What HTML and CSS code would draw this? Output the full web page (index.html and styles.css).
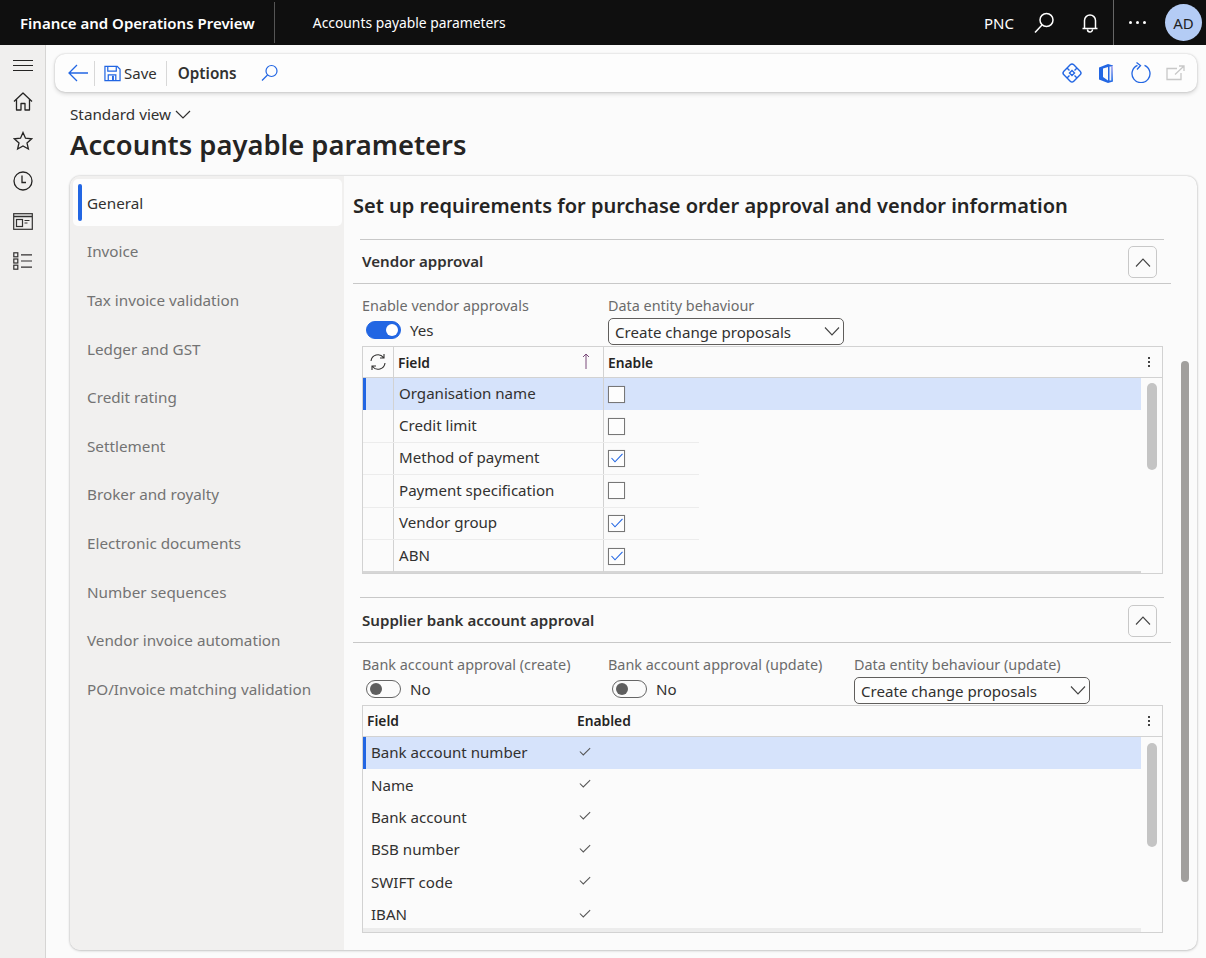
FILE: index.html
```html
<!DOCTYPE html>
<html>
<head>
    <meta charset="UTF-8">
    <link rel="stylesheet" href="styles.css">
</head>
<body>
    <header class="top-bar">
        <div class="app-name">Finance and Operations Preview</div>
        <div class="top-divider"></div>
        <div class="page-name">Accounts payable parameters</div>
        <div class="top-right">
            <span class="company">PNC</span>
            <svg class="search-icon" width="24" height="24" viewBox="0 0 24 24" fill="none" stroke="#fff" stroke-width="1.5"><circle cx="14.5" cy="9" r="6.5"/><path d="M10 14 3 21.5"/></svg>
            <svg class="bell-icon" width="16" height="20" viewBox="0 0 16 20" fill="none" stroke="#fff" stroke-width="1.5"><path d="M2.5 15V7.500a5.500 5.500 0 0 1 11 0V15M.5 15.500h15M5.500 16.500a2.500 2.500 0 0 0 5 0"/></svg>
            <div class="top-divider-tall"></div>
            <div class="more-dots"><i></i><i></i><i></i></div>
            <div class="avatar">AD</div>
        </div>
    </header>

    <div class="app-body">
        <nav class="side-nav">
            <div class="nav-menu"><svg width="20" height="12" viewBox="0 0 20 12" fill="none" stroke="#252423" stroke-width="1"><path d="M0 1.500h20M0 6.500h20M0 11.500h20"/></svg></div>
            <div class="nav-item"><svg width="20" height="19" viewBox="0 0 20 19" fill="none" stroke="#252423" stroke-width="1.300" stroke-linejoin="round"><path d="M1 9.500 10 1l9 8.500"/><path d="M3.500 7.500V18H8v-6.500h4V18h4.500V7.500"/></svg></div>
            <div class="nav-item"><svg width="20" height="20" viewBox="0 0 20 20" fill="none" stroke="#252423" stroke-width="1.300"><path d="m10 1.500 2.500 5.700 6.200.6-4.700 4.100 1.400 6.100L10 14.900l-5.400 3.100L6 11.900 1.300 7.800l6.200-.6z"/></svg></div>
            <div class="nav-item"><svg width="20" height="20" viewBox="0 0 20 20" fill="none" stroke="#252423" stroke-width="1.300"><circle cx="10" cy="10" r="9"/><path d="M9 4.500V11.500H13"/></svg></div>
            <div class="nav-item"><svg width="20" height="17" viewBox="0 0 20 17" fill="none" stroke="#323130" stroke-width="1.200"><rect x=".7" y=".7" width="18.600" height="15.600"/><path d="M1 3.500h18" stroke-width="1.500"/><rect x="3.500" y="6.500" width="6" height="7"/><path d="M11.500 7.500h5M11.500 10h3"/></svg></div>
            <div class="nav-item"><svg width="20" height="18" viewBox="0 0 20 18" fill="none" stroke="#323130" stroke-width="1.200"><rect x=".8" y=".8" width="4" height="4"/><rect x=".8" y="7" width="4" height="4"/><rect x=".8" y="13.200" width="4" height="4"/><path d="M8 2.800h11M8 9h11M8 15.200h11"/></svg></div>
        </nav>

        <main class="main">
            <div class="toolbar">
                <svg class="back-icon" width="20" height="18" viewBox="0 0 20 18" fill="none" stroke="#2266e3" stroke-width="1.300"><path d="M20 9H1M9 1 1 9l8 8"/></svg>
                <div class="tool-sep tool-sep-first"></div>
                <svg class="save-icon" width="17" height="17" viewBox="0 0 18 18" fill="none" stroke="#2266e3" stroke-width="1.300"><path d="M1 1.500h13l3 3v12H1z"/><path d="M4 1.500v5h9v-5M4.500 16.500V10.500h8v6"/><path d="M9.500 11.500v5" stroke-width="2"/></svg>
                <span class="tool-save">Save</span>
                <div class="tool-sep"></div>
                <span class="tool-options">Options</span>
                <svg class="tool-search" width="18" height="18" viewBox="0 0 18 18" fill="none" stroke="#2266e3" stroke-width="1.200"><circle cx="10.500" cy="7" r="5.500"/><path d="M6.500 11 1 16.500"/></svg>
                <div class="tool-right">
                    <svg width="20" height="20" viewBox="0 0 20 20" fill="none" stroke="#2266e3" stroke-width="1.400"><rect x="3" y="3" width="14" height="14" rx="2.500" transform="rotate(45 10 10)"/><path d="M10 7.500 12.500 10 10 12.500 7.500 10zM5 5l2.500 2.500M15 5l-2.500 2.500M5 15l2.500-2.500M15 15l-2.500-2.500"/></svg>
                    <svg width="16" height="19" viewBox="0 0 16 19"><defs><linearGradient id="officeEdge" x1="0" y1="0" x2="0" y2="1"><stop offset="0" stop-color="#c9b8f0"/><stop offset="1" stop-color="#2f7be8"/></linearGradient></defs><path d="M10 0 1 3.500v12L10 19l5-1.500V1.500z" fill="#2266e3"/><path d="M10 3 5 4.500V13l5 3.500z" fill="#fbfbfb"/><path d="M11.500 2.500h2v14h-2z" fill="#eef1fb"/><path d="M13.500 2h1.500v15h-1.500z" fill="url(#officeEdge)"/></svg>
                    <svg class="refresh-icon" width="20" height="21" viewBox="0 0 20 21" fill="none" stroke="#2266e3" stroke-width="1.300"><path d="M6.500 3.300a9 9 0 1 0 7 0"/><path d="M5.500.5 9.500 3.500 6 7.500"/></svg>
                    <svg width="19" height="16" viewBox="0 0 19 16" fill="none" stroke="#c8c8c8" stroke-width="1.300"><path d="M11 3.500H1v11h14V8M9 9.500 18 1M13 1h5v5"/></svg>
                </div>
            </div>

            <div class="view-picker">Standard view
                <svg width="16" height="9" viewBox="0 0 16 9" fill="none" stroke="#323130" stroke-width="1.200"><path d="m1 1 7 7 7-7"/></svg>
            </div>
            <h1 class="page-title">Accounts payable parameters</h1>

            <div class="panel">
                <ul class="tabs">
                    <li class="tab tab-active">General</li>
                    <li class="tab">Invoice</li>
                    <li class="tab">Tax invoice validation</li>
                    <li class="tab">Ledger and GST</li>
                    <li class="tab">Credit rating</li>
                    <li class="tab">Settlement</li>
                    <li class="tab">Broker and royalty</li>
                    <li class="tab">Electronic documents</li>
                    <li class="tab">Number sequences</li>
                    <li class="tab">Vendor invoice automation</li>
                    <li class="tab">PO/Invoice matching validation</li>
                </ul>

                <div class="content">
                    <h2 class="content-title">Set up requirements for purchase order approval and vendor information</h2>

                    <section class="section">
                        <div class="section-head">
                            <span class="section-title">Vendor approval</span>
                            <button class="collapse-btn"><svg width="16" height="9" viewBox="0 0 16 9" fill="none" stroke="#444" stroke-width="1.100"><path d="m1 8.500 7-7.500 7 7.500"/></svg></button>
                        </div>
                        <div class="fields">
                            <div class="field-group">
                                <div class="field-label">Enable vendor approvals</div>
                                <div class="toggle-row">
                                    <span class="toggle toggle-on"></span>
                                    <span>Yes</span>
                                </div>
                            </div>
                            <div class="field-group">
                                <div class="field-label">Data entity behaviour</div>
                                <div class="select">Create change proposals
                                    <svg width="16" height="9" viewBox="0 0 16 9" fill="none" stroke="#444" stroke-width="1.100"><path d="m1 .5 7 7.500 7-7.500"/></svg>
                                </div>
                            </div>
                        </div>

                        <div class="grid">
                            <div class="grid-head">
                                <div class="mark-cell">
                                    <svg width="18" height="18" viewBox="0 0 18 18" fill="none" stroke="#323130" stroke-width="1.100"><path d="M2 8a7 7 0 0 1 12.500-3.500M16 10a7 7 0 0 1-12.500 3.500M15 1v4h-4M3 17v-4h4"/></svg>
                                </div>
                                <div class="field-cell head-field">Field
                                    <svg class="sort-arrow" width="8" height="16" viewBox="0 0 8 16" fill="none" stroke="#7a4a7a" stroke-width="1"><path d="M4 16V1M1 4l3-3 3 3"/></svg>
                                </div>
                                <div class="enable-cell head-enable">Enable</div>
                                <div class="grid-dots"><i></i><i></i><i></i></div>
                            </div>
                            <div class="row row-selected"><div class="row-cells"><div class="mark-cell"></div><div class="field-cell">Organisation name</div><div class="enable-cell"><span class="check"></span></div></div></div>
                            <div class="row"><div class="row-cells"><div class="mark-cell"></div><div class="field-cell">Credit limit</div><div class="enable-cell"><span class="check"></span></div></div></div>
                            <div class="row"><div class="row-cells"><div class="mark-cell"></div><div class="field-cell">Method of payment</div><div class="enable-cell"><span class="check"><svg width="12" height="10" viewBox="0 0 12 10" fill="none" stroke="#2266e3" stroke-width="1.100"><path d="m.5 5 3.500 3.800 7.500-8"/></svg></span></div></div></div>
                            <div class="row"><div class="row-cells"><div class="mark-cell"></div><div class="field-cell">Payment specification</div><div class="enable-cell"><span class="check"></span></div></div></div>
                            <div class="row"><div class="row-cells"><div class="mark-cell"></div><div class="field-cell">Vendor group</div><div class="enable-cell"><span class="check"><svg width="12" height="10" viewBox="0 0 12 10" fill="none" stroke="#2266e3" stroke-width="1.100"><path d="m.5 5 3.500 3.800 7.500-8"/></svg></span></div></div></div>
                            <div class="row row-last"><div class="row-cells"><div class="mark-cell"></div><div class="field-cell">ABN</div><div class="enable-cell"><span class="check"><svg width="12" height="10" viewBox="0 0 12 10" fill="none" stroke="#2266e3" stroke-width="1.100"><path d="m.5 5 3.500 3.800 7.500-8"/></svg></span></div></div></div>
                            <div class="grid-hscroll"></div>
                            <div class="grid-scrollbar"></div>
                        </div>
                    </section>

                    <section class="section section-second">
                        <div class="section-head">
                            <span class="section-title">Supplier bank account approval</span>
                            <button class="collapse-btn"><svg width="16" height="9" viewBox="0 0 16 9" fill="none" stroke="#444" stroke-width="1.100"><path d="m1 8.500 7-7.500 7 7.500"/></svg></button>
                        </div>
                        <div class="fields">
                            <div class="field-group">
                                <div class="field-label">Bank account approval (create)</div>
                                <div class="toggle-row">
                                    <span class="toggle"></span>
                                    <span>No</span>
                                </div>
                            </div>
                            <div class="field-group">
                                <div class="field-label">Bank account approval (update)</div>
                                <div class="toggle-row">
                                    <span class="toggle"></span>
                                    <span>No</span>
                                </div>
                            </div>
                            <div class="field-group">
                                <div class="field-label">Data entity behaviour (update)</div>
                                <div class="select">Create change proposals
                                    <svg width="16" height="9" viewBox="0 0 16 9" fill="none" stroke="#444" stroke-width="1.100"><path d="m1 .5 7 7.500 7-7.500"/></svg>
                                </div>
                            </div>
                        </div>

                        <div class="grid">
                            <div class="grid-head">
                                <div class="bank-name head-field">Field</div>
                                <div class="bank-enabled head-enable">Enabled</div>
                                <div class="grid-dots"><i></i><i></i><i></i></div>
                            </div>
                            <div class="row row-plain row-selected"><div class="bank-name">Bank account number</div><div class="bank-enabled"><svg class="tick" width="12" height="9" viewBox="0 0 14 10" fill="none" stroke="#555" stroke-width="1.200"><path d="m1 5 4 4 8-8"/></svg></div></div>
                            <div class="row row-plain"><div class="bank-name">Name</div><div class="bank-enabled"><svg class="tick" width="12" height="9" viewBox="0 0 14 10" fill="none" stroke="#555" stroke-width="1.200"><path d="m1 5 4 4 8-8"/></svg></div></div>
                            <div class="row row-plain"><div class="bank-name">Bank account</div><div class="bank-enabled"><svg class="tick" width="12" height="9" viewBox="0 0 14 10" fill="none" stroke="#555" stroke-width="1.200"><path d="m1 5 4 4 8-8"/></svg></div></div>
                            <div class="row row-plain"><div class="bank-name">BSB number</div><div class="bank-enabled"><svg class="tick" width="12" height="9" viewBox="0 0 14 10" fill="none" stroke="#555" stroke-width="1.200"><path d="m1 5 4 4 8-8"/></svg></div></div>
                            <div class="row row-plain"><div class="bank-name">SWIFT code</div><div class="bank-enabled"><svg class="tick" width="12" height="9" viewBox="0 0 14 10" fill="none" stroke="#555" stroke-width="1.200"><path d="m1 5 4 4 8-8"/></svg></div></div>
                            <div class="row row-plain"><div class="bank-name">IBAN</div><div class="bank-enabled"><svg class="tick" width="12" height="9" viewBox="0 0 14 10" fill="none" stroke="#555" stroke-width="1.200"><path d="m1 5 4 4 8-8"/></svg></div></div>
                            <div class="grid-hscroll grid-hscroll-light"></div>
                            <div class="grid-scrollbar grid-scrollbar-long"></div>
                        </div>
                    </section>

                    <div class="page-scrollbar"></div>
                </div>
            </div>
        </main>
    </div>
</body>
</html>
```

FILE: styles.css
```css
* {
    box-sizing: border-box;
}
body {
    margin: 0;
    width: 1206px;
    height: 958px;
    overflow: hidden;
    font-family: "Noto Sans", Arial, sans-serif;
    font-size: 15.1px;
    color: #323130;
    background-color: #fbfbfb;
}
h1, h2, ul {
    margin: 0;
    padding: 0;
}

/* top bar */
.top-bar {
    display: flex;
    align-items: center;
    height: 45px;
    padding-left: 20px;
    background-color: #0f0f0f;
    color: white;
}
.app-name {
    font-size: 15px;
    font-weight: 600;
}
.top-divider {
    width: 1px;
    height: 41px;
    margin: 0 38px 0 19px;
    background-color: #555;
}
.page-name {
    font-size: 13.850px;
}
.top-right {
    display: flex;
    align-items: center;
    margin-left: auto;
    height: 45px;
}
.company {
    margin-right: 18px;
    font-size: 15px;
}
.search-icon {
    margin-right: 26px;
}
.bell-icon {
    margin-right: 15px;
}
.top-divider-tall {
    width: 1px;
    height: 45px;
    background-color: #666;
}
.more-dots {
    display: flex;
    gap: 4px;
    margin: 0 19px 0 15px;
}
.more-dots i {
    width: 3px;
    height: 3px;
    border-radius: 50%;
    background-color: white;
}
.avatar {
    display: flex;
    align-items: center;
    justify-content: center;
    width: 37px;
    height: 37px;
    margin-right: 4px;
    border-radius: 50%;
    background-color: #b4ccf5;
    color: #1f1f1f;
    font-size: 15px;
}

/* layout */
.app-body {
    display: flex;
    height: 913px;
}
.side-nav {
    width: 46px;
    background-color: #f0efee;
    border-right: 1px solid #d6d5d4;
}
.nav-menu, .nav-item {
    display: flex;
    align-items: center;
    justify-content: center;
}
.nav-menu {
    height: 36px;
    padding-top: 4px;
}
.nav-item {
    height: 40px;
}
.main {
    flex: 1;
    padding: 9px 9px 0 9px;
}

/* toolbar */
.toolbar {
    display: flex;
    align-items: center;
    height: 38px;
    padding-left: 13px;
    border-radius: 10px;
    background-color: #fdfdfd;
    box-shadow: 0 0 2px rgba(0, 0, 0, 0.2), 0 2px 4px rgba(0, 0, 0, 0.15);
}
.back-icon {
    flex: none;
}
.tool-sep {
    width: 1px;
    height: 25px;
    margin: 0 9px 0 9px;
    background-color: #d8d8d8;
}
.tool-sep-first {
    margin: 0 9px 0 6px;
}
.tool-save {
    margin-left: 3px;
    font-size: 15px;
}
.tool-options {
    margin-left: 2px;
    font-size: 15.300px;
    font-weight: 600;
}
.tool-search {
    margin-left: 24px;
}
.tool-right {
    display: flex;
    align-items: center;
    gap: 16px;
    margin-left: auto;
    margin-right: 12px;
}
.refresh-icon {
    margin: -2px -1px 0 1px;
}

/* title area */
.view-picker {
    display: flex;
    align-items: center;
    gap: 4px;
    margin: 12px 0 0 15px;
    height: 20px;
    font-size: 15.250px;
}
.page-title {
    margin: 2px 0 0 15px;
    font-size: 27.350px;
    font-weight: 600;
    line-height: 38px;
    color: #252423;
}

/* panel */
.panel {
    display: flex;
    height: 774px;
    margin: 12px 0 0 15px;
    border-radius: 10px;
    overflow: hidden;
    background-color: #fbfbfb;
    box-shadow: 0 0 2px rgba(0, 0, 0, 0.25), 0 1px 3px rgba(0, 0, 0, 0.15);
}
.tabs {
    width: 274px;
    padding: 3px 2px 0 3px;
    list-style: none;
    background-color: #f1f0ef;
}
.tab {
    display: flex;
    align-items: center;
    height: 48.600px;
    padding-left: 14px;
    padding-bottom: 1px;
    font-size: 15.250px;
    color: #737373;
}
.tab-active {
    position: relative;
    height: 47px;
    margin-bottom: 1.600px;
    padding-bottom: 0;
    border-radius: 5px;
    background-color: #fdfdfd;
    color: #323130;
}
.tab-active::before {
    content: "";
    position: absolute;
    left: 5px;
    top: 5px;
    width: 4px;
    height: 37px;
    border-radius: 2px;
    background-color: #2266e3;
}
.content {
    position: relative;
    flex: 1;
    padding-left: 9px;
}
.content-title {
    height: 63px;
    padding-top: 14px;
    font-size: 20px;
    font-weight: 600;
    line-height: 32px;
    color: #252423;
}

/* sections */
.section {
    width: 818px;
}
.section-second {
    margin-top: 23px;
}
.section-head {
    position: relative;
    display: flex;
    align-items: center;
    justify-content: space-between;
    width: 804px;
    height: 45px;
    margin-left: 7px;
    padding: 0 7px 0 2px;
    border-top: 1px solid #c8c8c8;
}
.section-second .section-head {
    height: 46px;
}
.section-head::after {
    content: "";
    position: absolute;
    left: -7px;
    right: -7px;
    bottom: 0;
    height: 1px;
    background-color: #c8c8c8;
}
.section-title {
    margin-bottom: 2px;
    font-weight: 600;
}
.collapse-btn {
    display: flex;
    align-items: center;
    justify-content: center;
    width: 29px;
    height: 32px;
    padding: 0;
    border: 1px solid #c8c8c8;
    border-radius: 5px;
    background: none;
}
.fields {
    display: flex;
    height: 62px;
    margin-left: 9px;
    padding-top: 12px;
}
.field-group {
    width: 246px;
}
.field-label {
    height: 19px;
    margin-bottom: 3px;
    font-size: 14.400px;
    line-height: 19px;
    color: #6b6b6b;
}
.toggle-row {
    display: flex;
    align-items: center;
    gap: 9px;
    height: 24px;
    padding-left: 4px;
}
.toggle {
    position: relative;
    width: 35px;
    height: 18px;
    border: 1px solid #666;
    border-radius: 9px;
}
.toggle::after {
    content: "";
    position: absolute;
    left: 3px;
    top: 2px;
    width: 12px;
    height: 12px;
    border-radius: 50%;
    background-color: #5f5f5f;
}
.toggle-on {
    border-color: #2266e3;
    background-color: #2266e3;
}
.toggle-on::after {
    left: 19px;
    background-color: white;
}
.select {
    display: flex;
    align-items: center;
    justify-content: space-between;
    width: 236px;
    height: 27px;
    padding: 0 3px 0 6px;
    border: 1px solid #605e5c;
    border-radius: 5px;
    background-color: #fdfdfd;
}

/* grids */
.grid {
    position: relative;
    width: 801px;
    height: 228px;
    margin-left: 9px;
    border: 1px solid #d2d2d2;
}
.grid-head {
    display: flex;
    align-items: center;
    height: 31px;
    border-bottom: 1px solid #d2d2d2;
}
.head-field, .head-enable {
    font-size: 13.800px;
    font-weight: 600;
    color: #252423;
}
.grid-head .bank-name, .grid-head .bank-enabled {
    margin-bottom: 2px;
}
.grid-dots {
    display: flex;
    flex-direction: column;
    gap: 2px;
    margin-left: auto;
    margin-right: 12px;
}
.grid-dots i {
    width: 2px;
    height: 2px;
    background-color: #444;
}
.mark-cell {
    display: flex;
    align-items: center;
    justify-content: center;
    width: 30px;
    height: 100%;
}
.field-cell {
    position: relative;
    display: flex;
    align-items: center;
    width: 210px;
    height: 100%;
    padding: 0 0 2px 5px;
    border-left: 1px solid #d2d2d2;
}
.enable-cell {
    display: flex;
    align-items: center;
    height: 100%;
    padding-left: 4px;
    border-left: 1px solid #d2d2d2;
}
.head-field {
    padding: 0 0 0 4px;
}
.sort-arrow {
    position: absolute;
    right: 13px;
    top: 6px;
}
.row {
    width: 778px;
    height: 32.400px;
}
.row-cells {
    display: flex;
    width: 336px;
    height: 100%;
    border-bottom: 1px solid #ececec;
}
.row-selected {
    position: relative;
    background-color: #d6e3fb;
}
.row-selected::before {
    content: "";
    position: absolute;
    left: 0;
    top: 0;
    width: 3px;
    height: 100%;
    background-color: #2266e3;
}
.row-selected .row-cells, .row-last .row-cells {
    border-bottom: none;
}
.check {
    display: flex;
    align-items: center;
    justify-content: center;
    width: 17px;
    height: 17px;
    border: 1.500px solid #777;
    background-color: #fdfdfd;
    box-shadow: 0 0 1px rgba(0, 0, 0, 0.2);
}
.grid-hscroll {
    width: 778px;
    height: 2px;
    margin-top: -1px;
    background-color: #d6d6d6;
}
.grid-hscroll-light {
    height: 4px;
    margin-top: -3px;
    background-color: #ececec;
}
.grid-scrollbar {
    position: absolute;
    right: 5px;
    top: 36px;
    width: 10px;
    height: 87px;
    border-radius: 5px;
    background-color: #c4c4c4;
}
.grid-scrollbar-long {
    top: 37px;
    height: 104px;
}
.row-plain {
    display: flex;
    align-items: center;
    padding-bottom: 2px;
}
.bank-name {
    width: 214px;
    padding-left: 8px;
}
.grid-head .bank-name {
    padding-left: 4px;
}
.bank-enabled {
    display: flex;
    align-items: center;
}
.tick {
    margin-left: 2px;
    margin-top: -2px;
}
.page-scrollbar {
    position: absolute;
    right: 8px;
    top: 185px;
    width: 8px;
    height: 521px;
    border-radius: 4px;
    background-color: #a19f9d;
}
```
